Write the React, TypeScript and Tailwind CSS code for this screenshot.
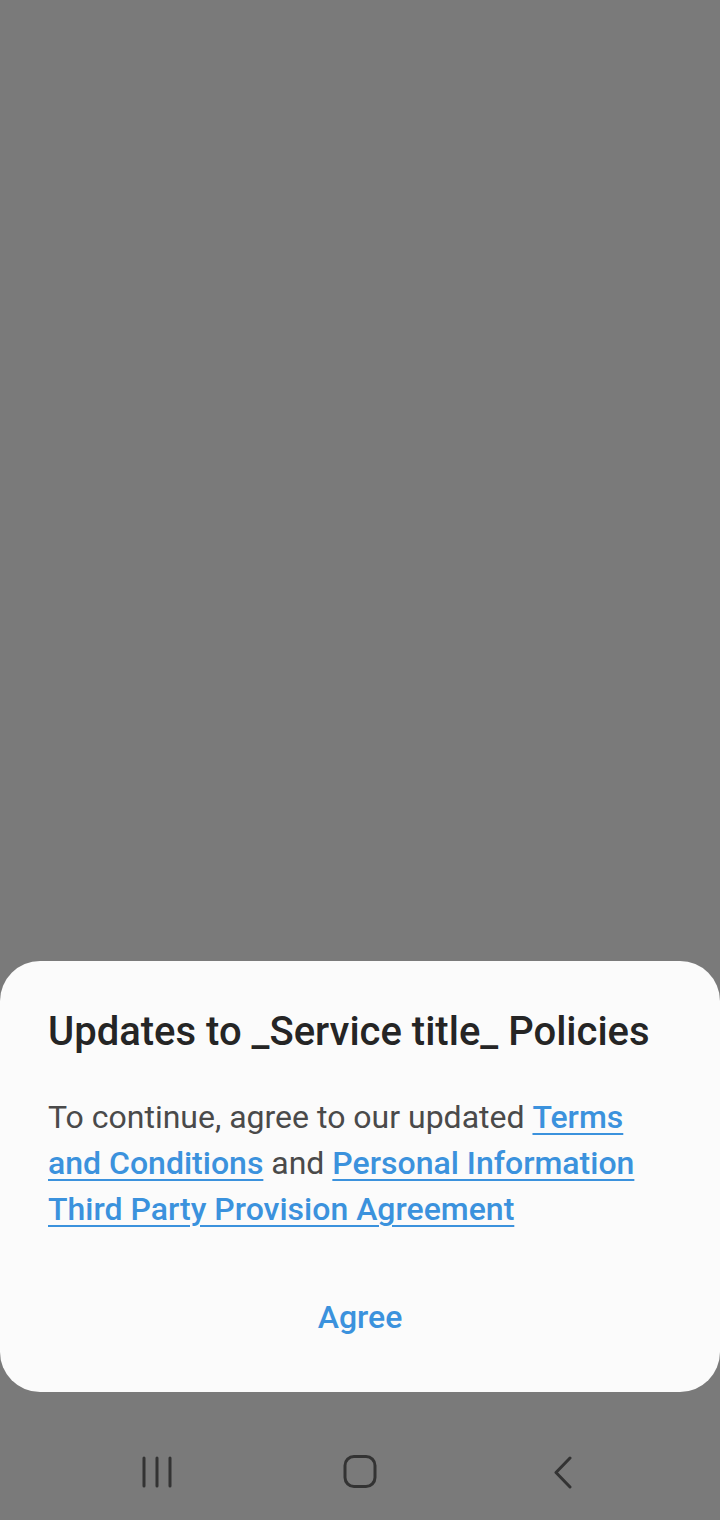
export default function App() {
  return (
    <div
      className="w-[720px] h-[1520px] bg-[#7a7a7a] flex flex-col"
      style={{ fontFamily: "Roboto, 'Noto Sans', sans-serif" }}
    >
      <div className="flex-1" />
      <div className="bg-[#fbfbfb] rounded-[40px] px-12 pt-[47px] pb-[55px]">
        <h1 className="text-[40px] leading-[48px] font-medium text-[#252525]">
          Updates to _Service title_ Policies
        </h1>
        <p className="mt-[38px] text-[32px] leading-[46px] text-[#4a4a4a]">
          To continue, agree to our updated{" "}
          <a className="text-[#3b92dd] underline decoration-2 underline-offset-[5px] font-medium">
            Terms and Conditions
          </a>{" "}
          and{" "}
          <a className="text-[#3b92dd] underline decoration-2 underline-offset-[5px] font-medium">
            Personal Information Third Party Provision Agreement
          </a>
        </p>
        <div className="mt-[65px] text-center text-[32px] leading-[40px] font-medium text-[#3b92dd]">
          Agree
        </div>
      </div>
      <div className="h-[128px] flex items-start justify-between pl-[141px] pr-[146px] pt-[64px]">
        <svg width="32" height="32" viewBox="0 0 32 32">
          <g stroke="#333" strokeWidth="3" strokeLinecap="round">
            <line x1="3" y1="2" x2="3" y2="30" />
            <line x1="16" y1="2" x2="16" y2="30" />
            <line x1="29" y1="2" x2="29" y2="30" />
          </g>
        </svg>
        <svg width="34" height="34" viewBox="0 0 34 34" className="-mt-[1px] mr-[6px]">
          <rect x="2" y="1.5" width="30" height="30" rx="9" fill="none" stroke="#333" strokeWidth="3" />
        </svg>
        <svg width="22" height="34" viewBox="0 0 22 34">
          <polyline points="18,2 4,16.5 18,31" fill="none" stroke="#333" strokeWidth="3" strokeLinecap="round" strokeLinejoin="round" />
        </svg>
      </div>
    </div>
  );
}
